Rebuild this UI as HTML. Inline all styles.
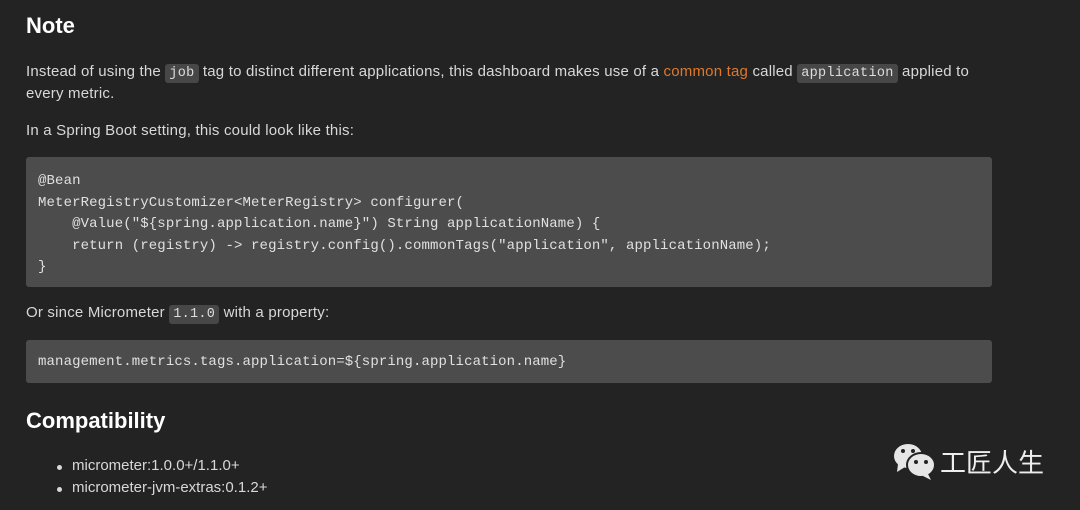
<!DOCTYPE html>
<html><head><meta charset="utf-8"><style>
html,body{margin:0;padding:0;background:#232323;width:1080px;height:510px;overflow:hidden}
body{font-family:"Liberation Sans","Noto Sans CJK SC",sans-serif;color:#d8d8d8;font-size:15px;position:relative}
.a{position:absolute;left:26px;white-space:nowrap;letter-spacing:0.2px}
h2{margin:0;font-size:22px;font-weight:bold;color:#fff;position:absolute;left:26px}
code{font-family:"Liberation Mono",monospace;font-size:13.5px;background:#474747;color:#ddd;padding:2px 4px;border-radius:3px;letter-spacing:0.3px}
.blk{position:absolute;left:26px;width:966px;background:#4c4c4c;border-radius:3px;font-family:"Liberation Mono",monospace;font-size:14px;letter-spacing:0.12px;color:#e0e0e0;white-space:pre;box-sizing:border-box;padding-left:12px}
.o{color:#e0782a}
ul{margin:0;padding:0;list-style:none}
li{position:absolute;left:72px;white-space:nowrap}
li:before{content:"";position:absolute;left:-15px;top:8px;width:5px;height:5px;border-radius:50%;background:#d8d8d8}
</style></head><body>
<h2 style="top:13px">Note</h2>
<div class="a" style="top:63px">Instead of using the <code>job</code> tag to distinct different applications, this dashboard makes use of a <span class="o">common tag</span> called <code>application</code> applied to</div>
<div class="a" style="top:85px">every metric.</div>
<div class="a" style="top:122px">In a Spring Boot setting, this could look like this:</div>
<div class="blk" style="top:157px;height:130px;padding-top:14px;line-height:21.5px">@Bean
MeterRegistryCustomizer&lt;MeterRegistry&gt; configurer(
    @Value("${spring.application.name}") String applicationName) {
    return (registry) -&gt; registry.config().commonTags("application", applicationName);
}</div>
<div class="a" style="top:304px">Or since Micrometer <code>1.1.0</code> with a property:</div>
<div class="blk" style="top:340px;height:43px;line-height:44px">management.metrics.tags.application=${spring.application.name}</div>
<h2 style="top:408px">Compatibility</h2>
<ul><li style="top:457px">micrometer:1.0.0+/1.1.0+</li><li style="top:479px">micrometer-jvm-extras:0.1.2+</li></ul>
<svg style="position:absolute;left:892px;top:442px" width="46" height="38" viewBox="0 0 46 38">
<ellipse cx="16" cy="14" rx="14" ry="12" fill="#e6e6e6"/>
<path d="M6 22 L5 30 L13 25 Z" fill="#e6e6e6"/>
<ellipse cx="29" cy="23" rx="14" ry="12" fill="#e6e6e6" stroke="#232323" stroke-width="2"/>
<path d="M36 32 L39 38 L31 34 Z" fill="#e6e6e6"/>
<circle cx="11" cy="9" r="2" fill="#232323"/><circle cx="21" cy="9" r="2" fill="#232323"/>
<circle cx="24" cy="20" r="2" fill="#232323"/><circle cx="34" cy="20" r="2" fill="#232323"/>
</svg>
<div style="position:absolute;left:940px;top:446px;font-size:26px;color:#eee;font-family:'Noto Sans CJK SC',sans-serif;line-height:32px">工匠人生</div>
</body></html>
